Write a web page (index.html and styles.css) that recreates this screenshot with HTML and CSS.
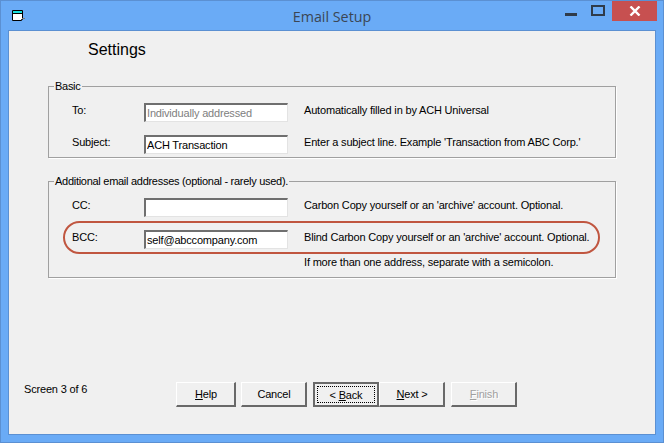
FILE: index.html
```html
<!DOCTYPE html>
<html lang="en">
<head>
<meta charset="utf-8">
<title>Email Setup</title>
<link rel="stylesheet" href="styles.css">
</head>
<body>
<div class="window">
  <header class="titlebar">
    <svg class="app-icon" width="13" height="12" viewBox="0 0 13 12">
      <path d="M.5.5H10.5V9.5H9.5V10.5H.5Z" fill="#fff" stroke="#000"/>
      <rect x="1" y="1" width="9" height="2" fill="#18e0e0"/>
      <rect x="1" y="3" width="9" height="1" fill="#000"/>
      <rect x="10" y="8" width="3" height="1" fill="#777"/>
    </svg>
    <h1 class="title">Email Setup</h1>
    <div class="controls">
      <span class="ctl-min"></span>
      <span class="ctl-max"></span>
      <span class="ctl-close">
        <svg width="12" height="10" viewBox="0 0 12 10"><path d="M1.5.5 10.5 9.5M10.5.5 1.5 9.5" stroke="#fff" stroke-width="2.4" fill="none"/></svg>
      </span>
    </div>
  </header>
  <main class="client">
    <h2 class="heading">Settings</h2>
    <fieldset class="group group-basic">
      <legend>Basic</legend>
      <div class="row">
        <label>To:</label>
        <input class="field disabled" type="text" value="Individually addressed" disabled>
        <p>Automatically filled in by ACH Universal</p>
      </div>
      <div class="row">
        <label>Subject:</label>
        <input class="field" type="text" value="ACH Transaction">
        <p>Enter a subject line. Example 'Transaction from ABC Corp.'</p>
      </div>
    </fieldset>
    <fieldset class="group group-extra">
      <legend>Additional email addresses (optional - rarely used).</legend>
      <div class="row">
        <label>CC:</label>
        <input class="field" type="text" value="">
        <p>Carbon Copy yourself or an 'archive' account. Optional.</p>
      </div>
      <div class="row">
        <label>BCC:</label>
        <input class="field" type="text" value="self@abccompany.com">
        <p>Blind Carbon Copy yourself or an 'archive' account. Optional.</p>
      </div>
      <p class="note">If more than one address, separate with a semicolon.</p>
      <div class="oval"></div>
    </fieldset>
    <footer class="footer">
      <span class="screen">Screen 3 of 6</span>
      <div class="buttons">
        <button class="btn btn-help"><u>H</u>elp</button>
        <button class="btn btn-cancel">Cancel</button>
        <button class="btn btn-back"><span class="focus">&lt; <u>B</u>ack</span></button>
        <button class="btn btn-next"><u>N</u>ext &gt;</button>
        <button class="btn btn-finish" disabled><u>F</u>inish</button>
      </div>
    </footer>
  </main>
</div>
</body>
</html>
```
FILE: styles.css
```css
* { box-sizing: border-box; }
html, body { margin: 0; padding: 0; }
body {
  width: 664px;
  height: 443px;
  overflow: hidden;
  font-family: "Liberation Sans", Arial, sans-serif;
  font-size: 11px;
  letter-spacing: -0.18px;
  line-height: 14px;
  color: #000;
}
.window {
  width: 664px;
  height: 443px;
  display: flex;
  flex-direction: column;
  background: #6aabf6;
  border: 1px solid #5b90d2;
}
.titlebar {
  height: 29px;
  flex: none;
  display: grid;
  grid-template-columns: 1fr auto 1fr;
  align-items: start;
}
.app-icon { margin: 9px 0 0 11px; }
.title {
  margin: 6px 0 0;
  font: 400 14.3px/19px "Open Sans", "Noto Sans", sans-serif;
  letter-spacing: 0;
  color: #3b4654;
}
.controls {
  justify-self: end;
  display: flex;
  align-items: flex-start;
  margin-right: 6px;
}
.ctl-min {
  width: 12px;
  height: 3px;
  margin: 12px 14px 0 0;
  background: #2f3b4a;
}
.ctl-max {
  width: 14px;
  height: 11px;
  margin: 4px 7px 0 0;
  border: 2px solid #2f3b4a;
}
.ctl-close {
  width: 45px;
  height: 20px;
  background: #c75050;
  display: flex;
  align-items: center;
  justify-content: center;
}
.client {
  flex: 1;
  margin: 0 7px 7px;
  display: flex;
  flex-direction: column;
  background: #f0f0f0;
  border: 1px solid #5b90d2;
}
.heading {
  margin: 10px 0 0 79px;
  font: 400 16px/18px "Liberation Sans", Arial, sans-serif;
  letter-spacing: 0;
  height: 18px;
}
.group {
  position: relative;
  margin: 0;
  width: 568px;
  margin-left: 39px;
  border: 1px solid #a0a0a0;
  box-shadow: 1px 1px 0 #fff;
  padding: 0 0 0 23px;
  min-width: 0;
}
.group legend {
  margin-left: -18px;
  padding: 0 1px;
  height: 14px;
  line-height: 14px;
  letter-spacing: -0.28px;
}
.group-basic { margin-top: 20px; padding-top: 10px; padding-bottom: 4px; }
.group-extra { margin-top: 16px; padding-top: 10px; padding-bottom: 8px; }
.row {
  display: grid;
  grid-template-columns: 72px 144px 1fr;
  column-gap: 0;
  height: 18px;
  margin-bottom: 14px;
}
.group-basic .row:last-child { margin-bottom: 0; }
.group-extra .row:nth-of-type(2) { margin-bottom: 7px; }
.row label, .row p, .note { margin: 0; white-space: nowrap; }
.row p { padding-left: 16px; }
.note { padding-left: 232px; }
.field {
  width: 144px;
  height: 19px;
  padding: 0 0 1px 1px;
  margin: 0;
  font: 11px/14px "Liberation Sans", Arial, sans-serif;
  letter-spacing: -0.18px;
  color: #000;
  background: #fff;
  border: 1px solid #fff;
  border-top: 2px solid #6f6f6f;
  border-left: 2px solid #6f6f6f;
  border-right-color: #e3e3e3;
  border-bottom-color: #e3e3e3;
  outline: none;
  border-radius: 0;
  appearance: none;
}
.field.disabled { color: #808080; -webkit-text-fill-color: #808080; opacity: 1; }
.oval {
  position: absolute;
  left: 14px;
  top: 33px;
  width: 537px;
  height: 33px;
  border: 2px solid #c05640;
  border-radius: 17px;
  pointer-events: none;
}
.footer {
  margin-top: auto;
  height: 52px;
  flex: none;
  display: flex;
  align-items: flex-start;
}
.screen { margin: 0 0 0 15px; width: 152px; }
.buttons { display: flex; }
.btn {
  height: 25px;
  padding: 0 0 0 1px;
  margin: 0;
  font: 11px/14px "Liberation Sans", Arial, sans-serif;
  letter-spacing: -0.18px;
  color: #000;
  background: #f0f0f0;
  border: 1px solid #fff;
  border-right: 2px solid #696969;
  border-bottom: 2px solid #696969;
  border-radius: 0;
  display: flex;
  align-items: center;
  justify-content: center;
}
.btn-help { width: 60px; margin-right: 5px; }
.btn-cancel { width: 66px; margin-right: 6px; }
.btn-back { width: 66px; padding: 0; border: 2px solid #696969; }
.btn-next { width: 66px; margin-right: 6px; }
.btn-finish { width: 66px; color: #a0a0a0; text-shadow: 1px 1px 0 #fff; }
.focus {
  width: 58px;
  height: 17px;
  display: flex;
  align-items: center;
  justify-content: center;
  border: 1px dotted #000;
  white-space: pre;
}
```
